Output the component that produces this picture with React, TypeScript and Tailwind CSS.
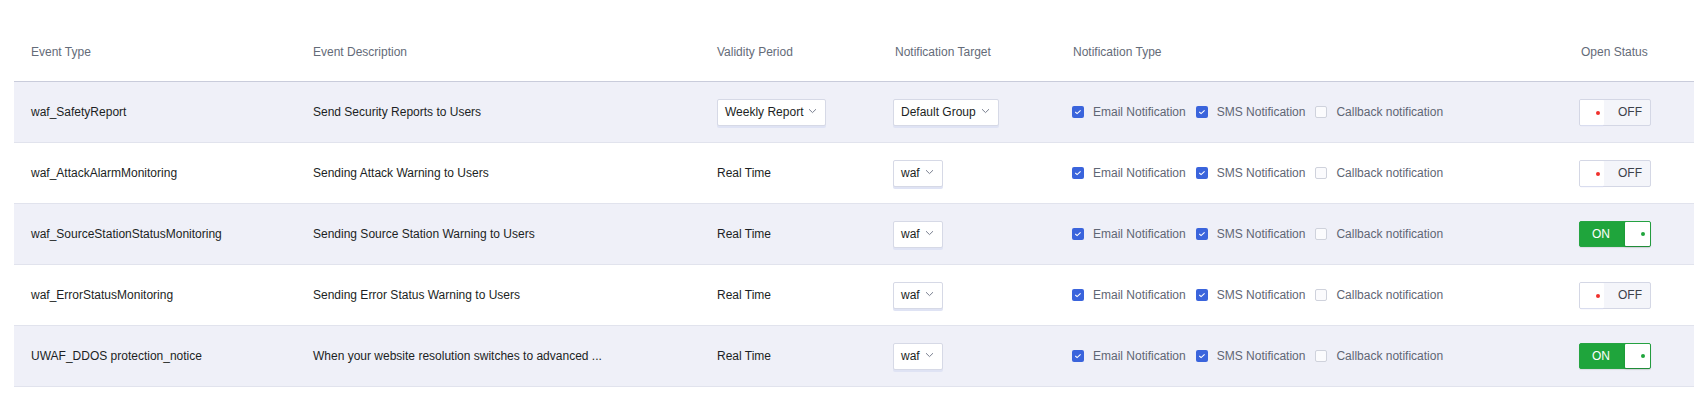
import React from "react";

type Row = {
  type: string;
  desc: string;
  period: string | null;
  target: string;
  on: boolean;
};

const rows: Row[] = [
  { type: "waf_SafetyReport", desc: "Send Security Reports to Users", period: null, target: "Default Group", on: false },
  { type: "waf_AttackAlarmMonitoring", desc: "Sending Attack Warning to Users", period: "Real Time", target: "waf", on: false },
  { type: "waf_SourceStationStatusMonitoring", desc: "Sending Source Station Warning to Users", period: "Real Time", target: "waf", on: true },
  { type: "waf_ErrorStatusMonitoring", desc: "Sending Error Status Warning to Users", period: "Real Time", target: "waf", on: false },
  { type: "UWAF_DDOS protection_notice", desc: "When your website resolution switches to advanced ...", period: "Real Time", target: "waf", on: true },
];

const cols = "grid grid-cols-[282px_404px_178px_177px_509px_130px]";

function Chevron() {
  return (
    <svg width="9" height="6" viewBox="0 0 9 6" className="ml-[5px] mt-[-2px]">
      <path d="M1 1.2 L4.5 4.6 L8 1.2" fill="none" stroke="#7a8090" strokeWidth="1" />
    </svg>
  );
}

function Select({ label }: { label: string }) {
  return (
    <div className="inline-flex h-[27px] items-center rounded-[2px] border border-[#d6d9e6] bg-white pl-[7px] pr-[8px] text-[12px] text-[#1c1f24] shadow-[0_2px_0_0_#dfe3f4]">
      <span>{label}</span>
      <Chevron />
    </div>
  );
}

function Checkbox({ checked, label }: { checked: boolean; label: string }) {
  return (
    <div className="flex items-center">
      {checked ? (
        <span className="flex h-[12px] w-[12px] items-center justify-center rounded-[2px] bg-[#3a64dc]">
          <svg width="8" height="6" viewBox="0 0 8 6">
            <path d="M1.3 3 L3.1 4.6 L6.6 1.3" fill="none" stroke="#ffffff" strokeWidth="1.1" />
          </svg>
        </span>
      ) : (
        <span className="h-[12px] w-[12px] rounded-[2px] border border-[#cfd2dc] bg-[#fbfbfd]" />
      )}
      <span className="ml-[9px] text-[12px] text-[#5f6674]">{label}</span>
    </div>
  );
}

function Toggle({ on }: { on: boolean }) {
  if (on) {
    return (
      <div className="flex h-[26px] w-[72px] items-stretch rounded-[2px] border border-[#25a442] bg-[#1fa53c] shadow-[0_1px_1px_rgba(0,0,0,0.08)]">
        <span className="flex flex-1 items-center pl-[12px] text-[12px] text-white">ON</span>
        <span className="relative w-[25px] rounded-[1px] bg-white shadow-[0_1px_2px_rgba(0,0,0,0.2)]">
          <span className="absolute right-[5px] top-[10px] h-[4px] w-[4px] rounded-full bg-[#1fa53c]" />
        </span>
      </div>
    );
  }
  return (
    <div className="flex h-[27px] w-[72px] items-stretch rounded-[2px] border border-[#d4d7e5] bg-[#f4f5fa]">
      <span className="relative w-[24px] rounded-[1px] bg-white shadow-[0_2px_1px_-1px_#d9ddef]">
        <span className="absolute right-[4px] top-[11px] h-[4px] w-[4px] rounded-full bg-[#f0302c]" />
      </span>
      <span className="flex flex-1 items-center pl-[14px] text-[12px] text-[#3c414a]">OFF</span>
    </div>
  );
}

export default function App() {
  return (
    <div className="min-h-[406px] w-[1704px] bg-white pt-[22px] pl-[14px]" style={{ fontFamily: '"Liberation Sans", Arial, sans-serif' }}>
      <div className="w-[1680px]">
        <div className={`${cols} h-[60px] items-center border-b border-[#c9ccdb] text-[12px] text-[#646b78]`}>
          <div className="pl-[17px]">Event Type</div>
          <div className="pl-[17px]">Event Description</div>
          <div className="pl-[17px]">Validity Period</div>
          <div className="pl-[17px]">Notification Target</div>
          <div className="pl-[18px]">Notification Type</div>
          <div className="pl-[17px]">Open Status</div>
        </div>
        {rows.map((r, i) => (
          <div
            key={r.type}
            className={`${cols} h-[61px] items-center border-b border-[#e1e3ed] text-[12px] text-[#1c1f24] ${i % 2 === 0 ? "bg-[#eff0f8]" : "bg-white"}`}
          >
            <div className="pl-[17px]">{r.type}</div>
            <div className="pl-[17px]">{r.desc}</div>
            <div className="pl-[17px]">{r.period ? r.period : <Select label="Weekly Report" />}</div>
            <div className="pl-[15px]">
              <Select label={r.target} />
            </div>
            <div className="flex items-center gap-[10px] pl-[17px]">
              <Checkbox checked label="Email Notification" />
              <Checkbox checked label="SMS Notification" />
              <Checkbox checked={false} label="Callback notification" />
            </div>
            <div className="pl-[15px]">
              <Toggle on={r.on} />
            </div>
          </div>
        ))}
      </div>
    </div>
  );
}
